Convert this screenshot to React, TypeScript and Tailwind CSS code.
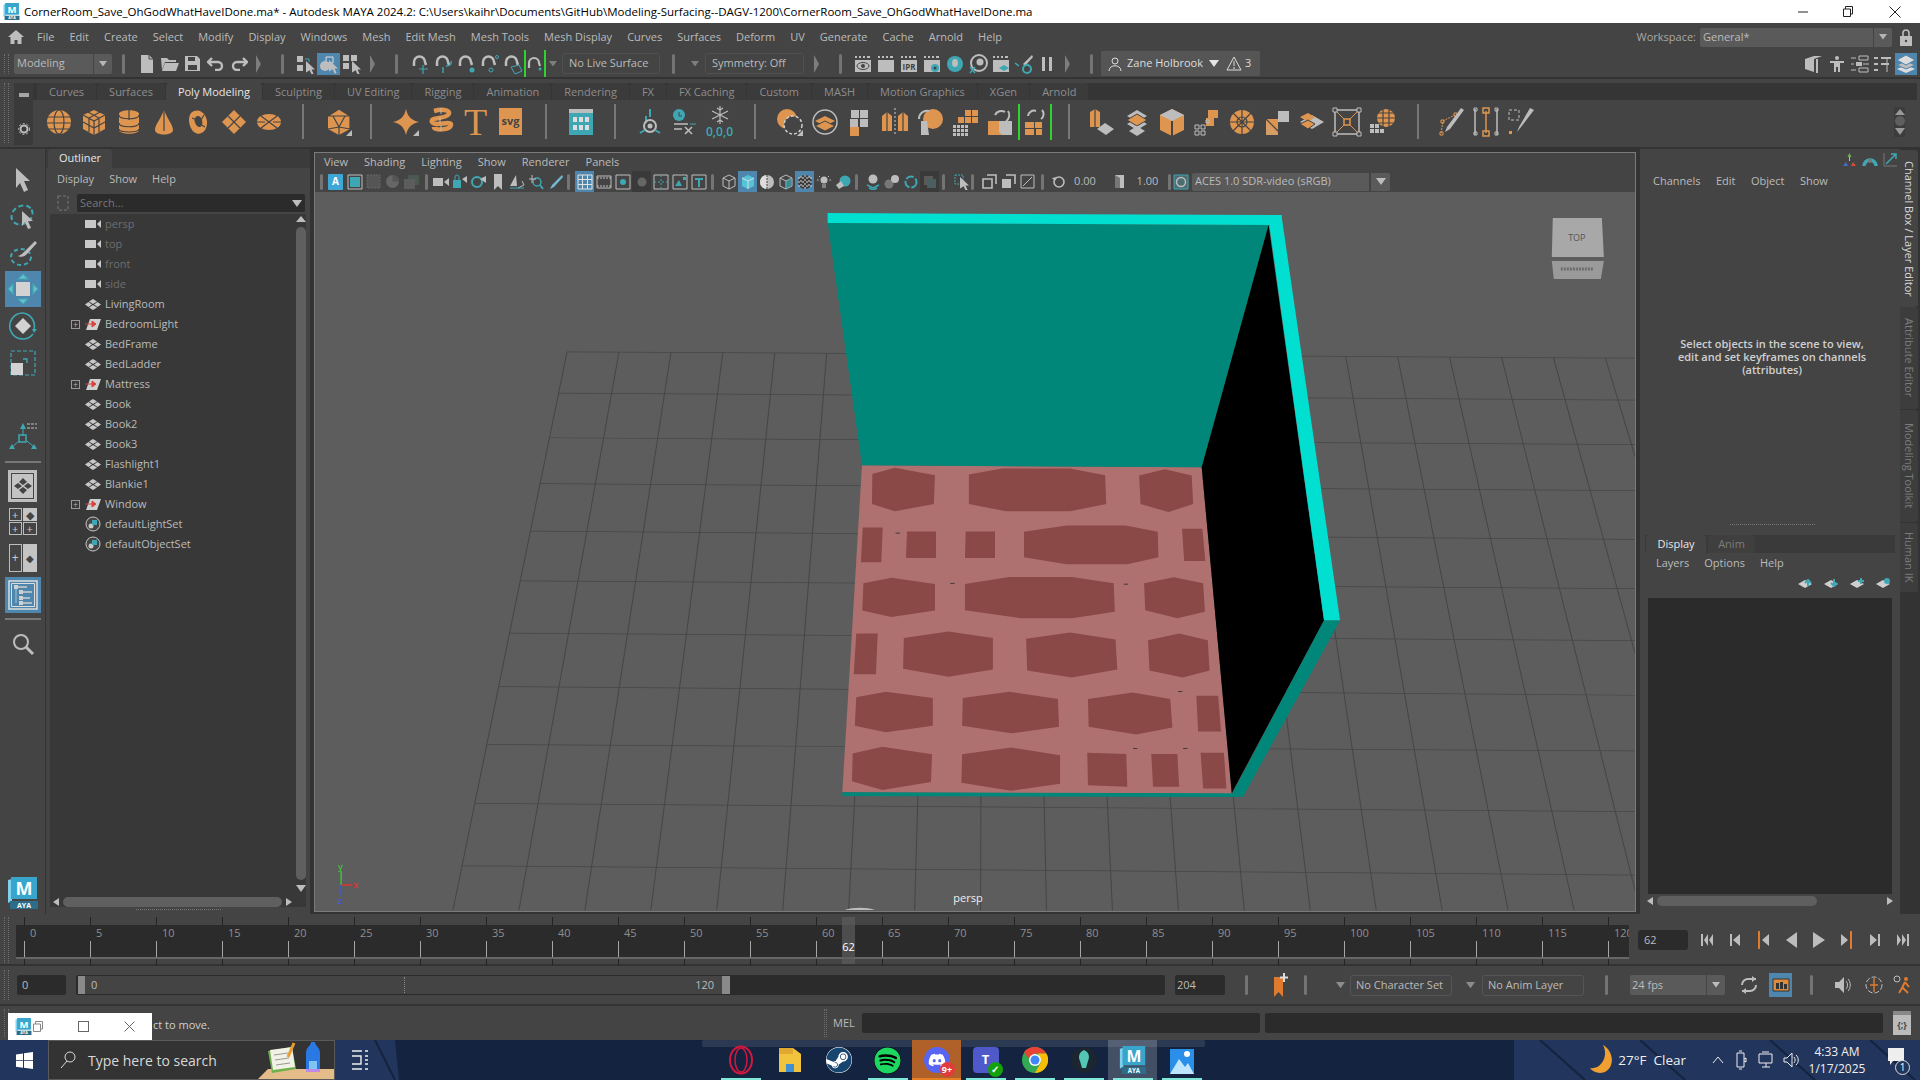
import type { ReactNode } from 'react'
import { FaDiscord, FaSpotify, FaSteam } from 'react-icons/fa'

const G = '#bdbdbd'
const O = '#dd9550'
const T = '#3fa7b4'
const D = '#444444'

function Ic({ s = 16, h, children }: { s?: number; h?: number; children: ReactNode }) {
  return (
    <svg width={s} height={h ?? s} viewBox={`0 0 ${s} ${h ?? s}`} fill="none" className="shrink-0">
      {children}
    </svg>
  )
}

const Cursor = ({ x = 0, y = 0, c = G }: { x?: number; y?: number; c?: string }) => (
  <path transform={`translate(${x} ${y})`} d="M0 0l9 8.5H5.6l2 4.5-1.9.8-2-4.6L0 11.5z" fill={c} />
)

const Sep = ({ className = '' }: { className?: string }) => (
  <div className={`h-[20px] w-[3px] shrink-0 rounded-full bg-[#747474] ${className}`} />
)

const Fold = ({ className = '' }: { className?: string }) => (
  <svg width="5" height="18" viewBox="0 0 5 18" className={`shrink-0 ${className}`}>
    <path d="M0 0l5 9-5 9z" fill="#7d7d7d" />
  </svg>
)

const Grip = ({ className = '' }: { className?: string }) => (
  <div className={`w-[5px] shrink-0 border-x border-dotted border-[#6e6e6e] ${className}`} />
)

const Tri = ({ c = '#8c8c8c', w = 8 }: { c?: string; w?: number }) => (
  <svg width={w} height={w * 0.7} viewBox="0 0 8 5.6" className="shrink-0">
    <path d="M0 0h8L4 5.6z" fill={c} />
  </svg>
)

const Slot = ({ w = 23, blue, dark, children }: { w?: number; blue?: boolean; dark?: boolean; children?: ReactNode }) => (
  <div
    className={`flex h-[22px] shrink-0 items-center justify-center ${blue ? 'bg-[#4f86ad]' : ''} ${dark ? 'bg-[#3a3a3a]' : ''}`}
    style={{ width: w }}
  >
    {children}
  </div>
)

const Green = ({ children }: { children: ReactNode }) => (
  <div className="flex h-[27px] w-[22px] items-center justify-center border-x-2 border-[#2fd32f]">{children}</div>
)

const menus = ['File', 'Edit', 'Create', 'Select', 'Modify', 'Display', 'Windows', 'Mesh', 'Edit Mesh', 'Mesh Tools', 'Mesh Display', 'Curves', 'Surfaces', 'Deform', 'UV', 'Generate', 'Cache', 'Arnold', 'Help']
const shelfTabs = ['Curves', 'Surfaces', 'Poly Modeling', 'Sculpting', 'UV Editing', 'Rigging', 'Animation', 'Rendering', 'FX', 'FX Caching', 'Custom', 'MASH', 'Motion Graphics', 'XGen', 'Arnold']

function TitleBar() {
  return (
    <div className="flex h-[23px] shrink-0 items-center bg-white pl-[3px] text-[11.5px] text-black">
      <MayaLogo size={17} />
      <span className="ml-[4px] whitespace-nowrap">
        CornerRoom_Save_OhGodWhatHaveIDone.ma* - Autodesk MAYA 2024.2: C:\Users\kaihr\Documents\GitHub\Modeling-Surfacing--DAGV-1200\CornerRoom_Save_OhGodWhatHaveIDone.ma
      </span>
      <div className="ml-auto flex items-center">
        <svg width="10" height="10" viewBox="0 0 10 10" className="mr-[35px]"><path d="M0 5h10" stroke="#222" /></svg>
        <svg width="10" height="11" viewBox="0 0 10 11" fill="none" className="mr-[36px]"><path d="M.5 3h7v7.5h-7zM2.5 3V.5h7v7.5H7.5" stroke="#222" /></svg>
        <svg width="12" height="12" viewBox="0 0 12 12" className="mr-[19px]"><path d="M.5.5l11 11M11.5.5l-11 11" stroke="#222" /></svg>
      </div>
    </div>
  )
}

function MenuBar() {
  return (
    <div className="flex h-[27px] shrink-0 items-center pt-[1px] pl-[8px] text-[11px] text-[#bbbbbb]">
      <svg width="16" height="16" viewBox="0 0 16 16"><path d="M8 1L0 8h2.5v7h4v-4h3v4h4V8H16z" fill={G} /></svg>
      <div className="ml-[13px] flex gap-[15px] whitespace-nowrap">
        {menus.map((m, i) => <span key={i}>{m}</span>)}
      </div>
      <span className="ml-auto text-[#a9a9a9]">Workspace:</span>
      <div className="ml-[4px] flex h-[19px] w-[192px] items-center rounded-[2px] bg-[#5a5a5a] pl-[3px]">
        <span>General*</span>
        <div className="ml-auto flex h-full w-[19px] items-center justify-center border-l border-[#444]"><Tri c="#b5b5b5" /></div>
      </div>
      <svg width="12" height="17" viewBox="0 0 12 17" fill="none" className="ml-[8px] mr-[8px]"><path d="M3 7V4a3 3 0 016 0v3" stroke={G} strokeWidth="1.6" /><path d="M0 7h12v10H0z" fill={G} /><circle cx="6" cy="12" r="1.2" fill="#444" /></svg>
    </div>
  )
}

const Field = ({ w, children }: { w: number; children: ReactNode }) => (
  <div className="flex h-[21px] shrink-0 items-center rounded-[3px] border border-[#505050] pl-[6px] text-[#bbbbbb]" style={{ width: w }}>
    <span className="whitespace-nowrap">{children}</span>
  </div>
)

const Magnet = ({ children }: { children?: ReactNode }) => (
  <Ic s={22}>
    <path d="M5 13V9a5.5 5.5 0 0111 0l1 3" stroke={G} strokeWidth="2.5" />
    {children}
  </Ic>
)

const Clap = ({ children }: { children?: ReactNode }) => (
  <Ic s={18}>
    <path d="M1 1h2v2H1zM5 1h2v2H5zM9 1h2v2H9zM13 1h3v2h-3z" fill={G} />
    <path d="M1 5h16v12H1z" fill={G} />
    {children}
  </Ic>
)

function StatusLine() {
  return (
    <div className="flex h-[29px] shrink-0 items-center border-b-2 border-[#333] pl-[4px] text-[11px]">
      <Grip className="h-[20px]" />
      <div className="ml-[5px] flex h-[20px] w-[98px] shrink-0 items-center rounded-[2px] bg-[#5a5a5a] pl-[3px] text-[#bbbbbb]">
        <span>Modeling</span>
        <div className="ml-auto flex h-full w-[19px] items-center justify-center border-l border-[#444]"><Tri c="#b5b5b5" /></div>
      </div>
      <Sep className="ml-[10px]" />
      <div className="ml-[10px] flex">
        <Slot><Ic s={14} h={18}><path d="M1 0h8l4 4v14H1z" fill={G} /><path d="M9 0v4h4" stroke="#444" /></Ic></Slot>
        <Slot><Ic s={18} h={16}><path d="M0 2h6l2 2h7v2H4L1 14zM4 7h14l-3 8H1z" fill={G} /></Ic></Slot>
        <Slot><Ic s={15}><path d="M0 0h12l3 3v12H0z" fill={G} /><path d="M3 1h7v4H3zM3 9h9v5H3z" fill="#444" /></Ic></Slot>
        <Slot><Ic s={18} h={14}><path d="M5 1L1 5l4 4M2 5h9a4 4 0 010 8H8" stroke={G} strokeWidth="2.4" /></Ic></Slot>
        <Slot><Ic s={18} h={14}><path d="M13 1l4 4-4 4M16 5H7a4 4 0 000 8h3" stroke={G} strokeWidth="2.4" /></Ic></Slot>
      </div>
      <Fold className="ml-[6px]" />
      <Sep className="ml-[20px]" />
      <div className="ml-[10px] flex">
        <Slot><Ic s={20}><path d="M1 2h6v6H1zM1 11h6v6H1z" fill={G} /><path d="M9 5h4v3" stroke={T} /><Cursor x={10} y={7} /></Ic></Slot>
        <Slot blue><Ic s={20}><path d="M7 3h7v6H7z" stroke="#ddd" /><circle cx="6" cy="12" r="5" fill={G} /><Cursor x={10} y={6} /></Ic></Slot>
        <Slot><Ic s={20}><path d="M1 1h6v6H1zM9 1h6v6H9zM1 9h6v6H1z" fill={G} /><Cursor x={10} y={7} /></Ic></Slot>
      </div>
      <Fold className="ml-[7px]" />
      <Sep className="ml-[20px]" />
      <div className="ml-[10px] flex items-center">
        <Slot><Magnet><path d="M14 12v9M10 16h9" stroke={T} strokeWidth="1.2" /></Magnet></Slot>
        <Slot><Magnet><path d="M14 13c4 0 6-2 5-5M11 14v6" stroke={T} strokeWidth="1.4" /></Magnet></Slot>
        <Slot><Magnet><circle cx="17" cy="17" r="2.5" fill={T} /></Magnet></Slot>
        <Slot><Magnet><circle cx="13" cy="17" r="2" stroke={T} /><circle cx="19" cy="4" r="1.5" stroke={T} /></Magnet></Slot>
        <Slot><Magnet><path d="M10 14l8-2 3 6-7 3z" stroke={T} /></Magnet></Slot>
        <Slot><Green><Ic s={16}><path d="M2 12V7a5 5 0 0110 0l1 3" stroke={G} strokeWidth="2.2" /><circle cx="13" cy="13" r="1.5" fill={T} /></Ic></Green></Slot>
      </div>
      <div className="ml-[3px]"><Tri c="#7d7d7d" /></div>
      <div className="ml-[5px]"><Field w={98}>No Live Surface</Field></div>
      <Sep className="ml-[12px]" />
      <div className="ml-[16px]"><Tri c="#7d7d7d" /></div>
      <div className="ml-[6px]"><Field w={99}>Symmetry: Off</Field></div>
      <Fold className="ml-[10px]" />
      <Sep className="ml-[20px]" />
      <div className="ml-[9px] flex items-center">
        <Slot><Clap><ellipse cx="9" cy="11" rx="6" ry="3.5" stroke="#444" /><circle cx="9" cy="11" r="2" fill="#444" /></Clap></Slot>
        <Slot><Clap /></Slot>
        <Slot><Clap><text x="9" y="15" textAnchor="middle" fontSize="8" fontWeight="700" fill="#444">IPR</text></Clap></Slot>
        <Slot><Clap><circle cx="12" cy="13" r="4" fill={T} /><circle cx="12" cy="13" r="1.5" fill="#444" /></Clap></Slot>
        <Slot><Ic s={18}><circle cx="9" cy="9" r="8" fill={T} /><ellipse cx="9" cy="8" rx="3" ry="4" fill={G} /></Ic></Slot>
        <Slot><Ic s={20}><circle cx="11" cy="9" r="8" stroke={G} strokeWidth="2" /><circle cx="12" cy="8" r="3.5" fill={G} /><path d="M2 13l5 6M7 13l-5 6" stroke={T} strokeWidth="1.5" /></Ic></Slot>
        <Slot><Clap><path d="M7 13l5-3 5 3-5 3z" fill={T} /></Clap></Slot>
        <Slot><Ic s={20}><path d="M18 1L9 10l2 2 8-9z" fill={G} /><path d="M1 9l4 3" stroke={T} strokeWidth="1.5" /><circle cx="13" cy="15" r="4" stroke={T} strokeWidth="2" /></Ic></Slot>
        <Slot><Ic s={12} h={16}><path d="M1 1h3v14H1zM8 1h3v14H8z" fill={G} /></Ic></Slot>
      </div>
      <Fold className="ml-[7px]" />
      <Sep className="ml-[20px]" />
      <div className="ml-[8px] flex h-[25px] w-[159px] shrink-0 items-center rounded-[1px] bg-[#555] pl-[7px] text-[#dddddd]">
        <Ic s={14}><circle cx="7" cy="4" r="3" stroke="#ddd" /><path d="M1 14c0-7 12-7 12 0" stroke="#ddd" /></Ic>
        <span className="ml-[5px] whitespace-nowrap">Zane Holbrook</span>
        <div className="ml-[6px]"><Tri c="#e4e4e4" w={10} /></div>
        <svg width="16" height="15" viewBox="0 0 16 15" className="ml-[7px]"><path d="M8 1L1 14h14zM8 5v5M8 11v2" stroke="#ddd" fill="none" /></svg>
        <span className="ml-[3px]">3</span>
      </div>
      <div className="ml-auto flex items-center gap-[1px] pr-[3px]">
        <Slot w={22}><Ic s={20}><path d="M1 5l9-3h8l-8 3v13l-9-3z" fill={G} /><path d="M13 5v14" stroke={G} strokeWidth="2" /></Ic></Slot>
        <Slot w={22}><Ic s={18}><circle cx="9" cy="3" r="2" fill={G} /><path d="M2 6h14v2h-4v9h-2v-5H8v5H6V8H2z" fill={G} /></Ic></Slot>
        <Slot w={22}><Ic s={20}><path d="M1 4h5M9 2h9v4H9zM1 16h5M9 14h9v4H9zM1 10h3M13 10h6" stroke={G} /><path d="M6 8h6v4H6z" fill={G} /></Ic></Slot>
        <Slot w={22}><Ic s={20}><path d="M1 4h4M8 4h10M1 10h4M8 10h8M1 16h4" stroke={G} strokeWidth="2" /><path d="M14 4v14" stroke={G} /></Ic></Slot>
        <div className="flex h-[22px] w-[22px] items-center justify-center bg-[#4f86ad]">
          <Ic s={20}><path d="M10 11L1 15l9 4 9-4z" fill="#ddd" /><path d="M10 7L1 11l9 4 9-4z" fill={G} stroke="#4f86ad" /><path d="M10 1L1 6l9 5 9-5z" fill="#ddd" stroke="#4f86ad" /></Ic>
        </div>
      </div>
    </div>
  )
}

const S = ({ children }: { children: ReactNode }) => (
  <div className="flex w-[35px] shrink-0 items-center justify-center">
    <Ic s={30}>{children}</Ic>
  </div>
)

const ShelfSep = ({ className = '' }: { className?: string }) => <div className={`h-[35px] w-[2px] shrink-0 bg-[#777] ${className}`} />

const Corner = () => <path d="M28 23v6h-6z" fill={G} />
const line = { stroke: D, strokeWidth: 1.2 }

function ShelfIcons() {
  return (
    <div className="flex h-[43px] items-center pl-[8px]">
      <S><circle cx="15" cy="15" r="12" fill={O} /><g {...line}><ellipse cx="15" cy="15" rx="5" ry="12" /><path d="M4 10h22M3 16h24M5 22h20" /></g></S>
      <S><path d="M15 3l11 5v14l-11 6-11-6V8z" fill={O} /><g {...line}><path d="M4 8l11 6 11-6M15 14v14M9 5l11 6v14M21 5L10 11v14M4 15l11 6 11-6" /></g></S>
      <S><path d="M5 7c0-5 20-5 20 0v16c0 5-20 5-20 0z" fill={O} /><g {...line}><path d="M5 8c0 5 20 5 20 0M15 3v10M5 16c0 5 20 5 20 0M5 22c0 4 20 4 20 0" /></g></S>
      <S><path d="M15 3c4 10 9 15 9 20 0 6-18 6-18 0 0-5 5-10 9-20z" fill={O} /><path d="M15 3v21" {...line} /></S>
      <S><path d="M10 4c8-3 14 6 13 13-1 9-8 12-13 8S2 7 10 4zm1 7c-2 3 2 10 5 9s3-6 1-9-5-2-6 0z" fill={O} fillRule="evenodd" /><path d="M8 11l5 2M20 8l-3 5M21 20l-5-3" {...line} /></S>
      <S><path d="M15 3l12 12-12 12L3 15z" fill={O} /><path d="M9 9l12 12M21 9L9 21" {...line} /></S>
      <S><ellipse cx="15" cy="15" rx="12" ry="8" fill={O} /><path d="M7 9l16 12M23 9L7 21M3 15h8M19 15h8" {...line} /></S>
      <ShelfSep className="ml-[16px]" />
      <div className="ml-[17px]"><S><path d="M15 2l11 7v13l-11 6-11-6V9z" fill={O} /><path d="M4 9h22L15 2zM9 9l6 11 6-11M4 22l11-2 11 2M15 20v8M4 9l5 0M26 9v13" {...line} fill="none" /><Corner /></S></div>
      <ShelfSep className="ml-[14px]" />
      <div className="ml-[16px]"><S><path d="M15 2c2 8 5 11 13 13-8 2-11 5-13 13-2-8-5-11-13-13 8-2 11-5 13-13z" fill={O} /><Corner /></S></div>
      <S><path d="M8 4c10-3 18 0 14 4S4 10 6 15s20-2 19 3-17 6-17 2" stroke={O} strokeWidth="4.5" /><path d="M15 1v6M14 10v6M15 18v6" stroke={G} /></S>
      <div className="flex w-[35px] shrink-0 items-center justify-center font-['Liberation_Serif',serif] text-[38px] leading-none text-[#dd9550]">T</div>
      <div className="flex w-[35px] shrink-0 items-center justify-center">
        <div className="flex h-[27px] w-[23px] items-center justify-center bg-[#dd9550] text-[11px] font-bold text-[#444]">svg</div>
      </div>
      <ShelfSep className="ml-[17px]" />
      <div className="ml-[16px]"><S><path d="M3 2h24v26H3z" fill={T} /><path d="M3 2h24v4H3z" fill={G} /><path d="M7 10h4v5H7zM13 10h4v5h-4zM19 10h4v5h-4zM7 18h4v5H7zM13 18h4v5h-4zM19 18h4v5h-4z" fill="#ddd" /></S></div>
      <ShelfSep className="ml-[16px]" />
      <div className="ml-[16px]"><S><path d="M11 9v7" stroke={T} strokeWidth="2" /><circle cx="15" cy="19" r="6" stroke={G} strokeWidth="2" /><circle cx="15" cy="19" r="2.5" fill={G} /><path d="M5 26l5-3M25 26l-5-3M15 2v8" stroke={T} strokeWidth="2" /></S></div>
      <S><circle cx="9" cy="8" r="6" fill={T} /><path d="M9 5v4h3" stroke={D} /><path d="M4 17h14M4 22h8M15 20l7 7M22 20l-7 7" stroke={G} strokeWidth="1.6" /><path d="M20 17h6" stroke={T} /></S>
      <div className="flex w-[35px] shrink-0 flex-col items-center">
        <Ic s={20}><path d="M10 0v18M2 5l16 8M18 5L2 13M7 2l3 2 3-2M7 16l3-2 3 2" stroke={G} strokeWidth="1.2" /></Ic>
        <span className="text-[12px] font-semibold leading-[11px] text-[#3fa7b4]">0,0,0</span>
      </div>
      <ShelfSep className="ml-[17px]" />
      <div className="ml-[16px]"><S><circle cx="12" cy="12" r="10" fill={O} /><circle cx="18" cy="18" r="9" stroke="#cfcfcf" strokeDasharray="3 2" strokeWidth="1.5" fill={D} /><path d="M28 23v6h-6z" fill={G} /></S></div>
      <S><circle cx="15" cy="15" r="12" stroke={G} strokeWidth="1.5" /><path d="M15 9l10 5-10 5-10-5z" fill={O} /><path d="M15 14l10 5-10 5-10-5z" fill={O} stroke={D} /></S>
      <S><path d="M15 3h8v8h-8zM24 3h-0zM15 12h8v8h-8zM5 12h8v8H5z" fill={G} /><path d="M5 20h9v9H5z" fill={O} /><path d="M6 3h8v8H6z" fill={G} /></S>
      <S><path d="M2 9l5-4 5 4v15H2zM18 9l5-4 5 4v15H18z" fill={O} /><path d="M7 5v19M23 5v19" {...line} /><path d="M15 1v28" stroke="#ccc" strokeDasharray="2 2" /></S>
      <S><circle cx="18" cy="12" r="10" fill={O} /><path d="M6 14l6 0 2 14H6z" fill={G} /><path d="M4 12a8 8 0 0110-8" stroke={G} strokeWidth="2" /></S>
      <S><path d="M15 3h6v6h-6zM22 3h6v6h-6zM15 10h6v6h-6zM22 10h6v6h-6zM8 10h6v6H8z" fill={O} /><path d="M3 18h3v3H3zM7 18h3v3H7zM11 18h3v3h-3zM15 18h3v3h-3zM3 22h3v3H3zM7 22h3v3H7zM11 22h3v3h-3zM15 22h3v3h-3zM3 26h3v3H3zM7 26h3v3H7zM11 26h3v3h-3zM15 26h3v3h-3z" fill={G} /></S>
      <S><path d="M14 14h13v14H3V14z" fill={G} /><path d="M3 14h11v14H3zL14 28" fill={O} /><path d="M3 14l14 14H3z" fill={O} /><path d="M10 8a7 7 0 0110-3M23 4a7 7 0 01-2 10" stroke={G} strokeWidth="2" /></S>
      <div className="flex w-[35px] shrink-0 items-center justify-center">
        <div className="flex h-[36px] w-[34px] items-center justify-center border-x-2 border-[#2fd32f]">
          <Ic s={30}><path d="M5 15h9v6H5zM15 15h7v6h-7zM5 22h9v6H5z" fill={O} /><path d="M16 22h6v6h-6z" fill={O} /><path d="M8 9a6 6 0 018-5M22 3a6 6 0 01-1 9" stroke={G} strokeWidth="2" /></Ic>
        </div>
      </div>
      <ShelfSep className="ml-[16px]" />
      <div className="ml-[14px]"><S><path d="M3 5l5-3 5 3v15H3z" fill={O} /><path d="M8 2v18" {...line} /><path d="M18 16l9 6-8 6-9-6z" fill={G} /></S></div>
      <S><path d="M15 3l10 6-10 6L5 9zM15 11l10 6-10 6-10-6z" fill={G} /><path d="M15 7l10 6-10 6-10-6z" fill={O} stroke={D} /><path d="M15 19l8 5-8 5-8-5z" fill={G} /></S>
      <S><path d="M15 2l12 6v15l-12 6-12-6V8z" fill={O} /><path d="M15 2l12 6-12 6L3 8z" fill={G} /><path d="M15 14v15" stroke={D} strokeWidth="2" /></S>
      <S><path d="M16 3h10v8h-4v8h-8v-8h2z" fill={O} /><path d="M3 18h4v4H3zM9 18h4v4H9zM3 24h4v4H3zM9 24h4v4H9z" stroke={G} /><path d="M14 13h3v3h-3z" stroke={G} /></S>
      <S><circle cx="15" cy="15" r="12" fill={O} /><circle cx="15" cy="15" r="5" {...line} /><path d="M15 3v24M3 15h24M6 6l18 18M24 6L6 24" {...line} /></S>
      <S><path d="M4 12h12v16H4z" fill={O} /><path d="M4 12l12 16H4z" fill={G} opacity=".2" /><path d="M16 4h11v11l-11 0z" fill={G} /><path d="M4 12L16 24" {...line} /></S>
      <S><path d="M15 8l12 7-12 7-12-7z" fill={G} /><path d="M11 6l7 4-7 5-8-5z" fill={O} /><path d="M11 13l7 4-7 5-8-5z" fill={O} stroke={D} /></S>
      <S><path d="M3 3h24v24H3z" stroke={G} strokeWidth="1.5" /><path d="M4 4l8 8M26 4l-8 8M4 26l8-8M26 26l-8-8" stroke={O} /><path d="M12 12h6v6h-6z" stroke={O} strokeWidth="1.5" /><path d="M1 1h4v4H1zM25 1h4v4h-4zM1 25h4v4H1zM25 25h4v4h-4z" fill={D} stroke={G} /></S>
      <S><circle cx="19" cy="11" r="9" fill={O} /><path d="M11 6h16M10 11h18M12 16h14M16 2v18M22 2v18" {...line} /><path d="M3 17h4v4H3zM8 17h4v4H8zM3 22h4v4H3zM8 22h4v4H8zM13 22h4v4h-4z" fill={G} /></S>
      <ShelfSep className="ml-[18px]" />
      <div className="ml-[14px]"><S><path d="M5 26l2-12 12-6" stroke={O} strokeDasharray="2 1" /><path d="M4 25h3v3H4zM5 13h3v3H5zM18 6h3v3h-3z" stroke={O} /><path d="M28 3l-14 19-5 3 2-5 14-19z" fill={G} /></S></div>
      <S><path d="M4 2v26M26 2v26" stroke={G} strokeWidth="1.5" /><path d="M15 4v22" stroke={O} strokeWidth="1.5" /><path d="M12 1h6v5h-6zM12 24h6v5h-6z" stroke={O} strokeWidth="1.5" /><path d="M3 1h3v3H3zM24 1h3v3h-3zM3 25h3v3H3zM24 25h3v3h-3z" stroke={G} /></S>
      <S><path d="M3 3h10v10H3z" stroke={G} strokeDasharray="3 2" /><path d="M3 24h3v3H3z" fill={O} /><path d="M28 3L15 20l-4 5 2-5L24 1z" fill={G} /></S>
      <div className="ml-auto mr-[12px] flex h-[30px] w-[11px] flex-col items-center justify-between bg-[#3c3c3c] py-[2px]">
        <svg width="10" height="6" viewBox="0 0 10 6"><path d="M5 0l5 6H0z" fill="#999" /></svg>
        <div className="h-[10px] w-[10px] rounded-full bg-[#5f5f5f]" />
        <Tri c="#999" w={10} />
      </div>
    </div>
  )
}

function Shelf() {
  return (
    <div className="flex h-[70px] shrink-0 items-start border-b-2 border-[#333] pt-[4px] pl-[4px]">
      <Grip className="h-[60px]" />
      <div className="ml-[5px] flex h-[62px] w-[19px] shrink-0 flex-col items-center justify-between bg-[#3a3a3a] py-[10px]">
        <div className="h-[4px] w-[10px] border-y border-[#a5a5a5] bg-[#a5a5a5]" />
        <Ic s={12}><circle cx="6" cy="6" r="3.5" stroke={G} strokeWidth="2" /><circle cx="6" cy="6" r="5.5" stroke={G} strokeDasharray="2 2" /></Ic>
      </div>
      <div className="flex min-w-0 flex-1 flex-col pr-[3px]">
        <div className="flex h-[17px] items-end gap-[1px] bg-[#353535] pl-[4px] text-[11px] leading-none">
          {shelfTabs.map((t, i) => (
            <div
              key={i}
              className={`flex h-[17px] items-center whitespace-nowrap rounded-t-[3px] px-[12px] ${t === 'Poly Modeling' ? 'bg-[#444] text-[#e6e6e6]' : 'bg-[#3b3b3b] text-[#8d8d8d]'}`}
            >
              {t}
            </div>
          ))}
        </div>
        <ShelfIcons />
      </div>
    </div>
  )
}

function Toolbox() {
  return (
    <div className="flex w-[45px] shrink-0 flex-col items-center bg-[#444] pt-[18px]">
      <Ic s={26}><path d="M6 1l14 13h-6l4 9-4 2-4-9-4 5z" fill={G} /></Ic>
      <div className="mt-[10px]"><Ic s={28}><ellipse cx="13" cy="12" rx="11" ry="9" stroke={T} strokeWidth="2" strokeDasharray="5 3" transform="rotate(-30 13 12)" /><path d="M13 8l11 10h-5l3 7-3 1-3-7-3 4z" fill={G} /></Ic></div>
      <div className="mt-[7px]"><Ic s={30}><ellipse cx="13" cy="19" rx="10" ry="8" stroke={T} strokeWidth="2" strokeDasharray="4 3" /><path d="M10 18c3-1 5-3 7-5l10-10 2 2-10 11c-2 2-5 4-9 2z" fill={G} /></Ic></div>
      <div className="mt-[3px] flex h-[36px] w-[36px] items-center justify-center bg-[#4f86ad]">
        <Ic s={32}><path d="M9 9h14v14H9z" fill="#d2d2d2" /><path d="M16 1l5 5H11zM16 31l5-5H11zM1 16l5-5v10zM31 16l-5-5v10z" stroke={T} strokeWidth="1.2" fill="#6cc0cc" /></Ic>
      </div>
      <div className="mt-[3px]"><Ic s={32}><path d="M16 3a13 13 0 1 0 10 21M27 19a13 13 0 0 0-11-16" stroke={T} strokeWidth="1.6" /><path d="M16 8l8 8-8 8-8-8z" fill="#d2d2d2" /><path d="M25 19l5 0-3 4z" fill={T} /></Ic></div>
      <div className="mt-[7px]"><Ic s={28}><path d="M2 2h24v24H2z" stroke={T} strokeWidth="1.2" strokeDasharray="4 2" /><path d="M2 14h12v12H2z" fill="#d2d2d2" /><path d="M14 10h4v4" stroke={T} strokeWidth="1.4" /></Ic></div>
      <div className="mt-[44px]"><Ic s={32}><path d="M16 2l3 6h-6zM2 28l3-5 3 5zM30 28l-3-5-3 5z" fill={T} /><path d="M16 8v7M12 20l-7 6M20 20l7 6" stroke={T} /><path d="M12 14h7v7h-7z" stroke={T} strokeWidth="1.5" /><path d="M20 3h10M20 7h10" stroke={G} strokeDasharray="3 1" /></Ic></div>
      <div className="mt-[8px] h-[2px] w-[36px] bg-[#777]" />
      <div className="mt-[7px] flex h-[32px] w-[29px] items-center justify-center border-2 border-[#bdbdbd] bg-[#c4c4c4] outline outline-1 -outline-offset-4 outline-[#444]">
        <Ic s={18}><path d="M9 1l4 4-4 3-4-3zM4 6l4 3-4 3-4-3zM14 6l4 3-4 3-4-3zM9 10l4 3-4 4-4-4z" fill="#444" /></Ic>
      </div>
      <div className="mt-[6px] grid w-[28px] grid-cols-2 gap-[1px]">
        <PanelCell /><PanelCell filled /><PanelCell /><PanelCell />
      </div>
      <div className="mt-[9px] grid w-[28px] grid-cols-2 gap-[1px]">
        <div className="flex h-[28px] items-center justify-center border border-[#bdbdbd] text-[12px] text-[#ccc]">+</div>
        <div className="flex h-[28px] items-center justify-center bg-[#c4c4c4] text-[10px] text-[#444]">◆</div>
      </div>
      <div className="mt-[5px] flex h-[36px] w-[36px] items-center justify-center bg-[#4f86ad]">
        <Ic s={30}><path d="M1 1h28v28H1z" stroke="#ddd" strokeWidth="1.5" /><path d="M3.5 3.5h23v23h-23z" stroke="#ddd" /><path d="M6 5h4v4H6zM11 10h4v4h-4zM11 16h4v4h-4zM11 21h4v4h-4z" fill="#d0d0d0" /><path d="M10 7h9M15 12h9M15 18h7M15 23h9" stroke="#d0d0d0" strokeWidth="1.5" /><path d="M8 9v14" stroke="#a8c4d6" /></Ic>
      </div>
      <div className="mt-[5px] h-[2px] w-[36px] bg-[#777]" />
      <div className="mt-[12px]"><Ic s={24}><circle cx="10" cy="10" r="7" stroke={G} strokeWidth="2" /><path d="M15 15l7 7" stroke={G} strokeWidth="3" /></Ic></div>
      <div className="mt-auto mb-[5px]"><MayaLogo size={32} /></div>
    </div>
  )
}

const PanelCell = ({ filled }: { filled?: boolean }) => (
  <div className={`flex h-[13px] items-center justify-center text-[11px] leading-none ${filled ? 'bg-[#c4c4c4] text-[#444]' : 'border border-[#bdbdbd] text-[#ccc]'}`}>
    {filled ? '◆' : '+'}
  </div>
)

function MayaLogo({ size }: { size: number }) {
  return (
    <svg width={size} height={size} viewBox="0 0 32 32" className="shrink-0">
      <path d="M1 3l4-1v22l-4 2z" fill="#7fd0ea" />
      <path d="M4 0h26v22H4z" fill="#37a5cc" />
      <path d="M3 24h28v8H3z" fill="#2c6d8a" />
      <text x="17" y="18" textAnchor="middle" fontSize="18" fontWeight="700" fill="#fff">M</text>
      <text x="17" y="31" textAnchor="middle" fontSize="7" fontWeight="700" fill="#fff">AYA</text>
    </svg>
  )
}

const CamIcon = () => <Ic s={16} h={10}><path d="M0 1h11v8H0z" fill="#c8c8c8" /><path d="M12 5l4-4v8z" fill="#c8c8c8" /></Ic>
const MeshIcon = () => <Ic s={16} h={11}><path d="M8 0l4 2.5L8 5 4 2.5zM3.5 3L7 5.5 3.5 8 0 5.5zM12.5 3L16 5.5 12.5 8 9 5.5zM8 6l4 2.5L8 11 4 8.5z" fill="#c8c8c8" /></Ic>
const LightIcon = () => <Ic s={16} h={13}><path d="M5 1h11l-4 11H1z" fill="#d0d0d0" /><path d="M0 6h10M7 3l4 3-4 3z" stroke="#d6423d" fill="#d6423d" /></Ic>
const SetIcon = () => <Ic s={16}><circle cx="8" cy="8" r="7" stroke="#c8c8c8" fill="#444" /><circle cx="6" cy="10" r="2.5" fill="#c8c8c8" /><path d="M7 4h5v5H7z" fill={T} /></Ic>

const rows: { name: string; kind: 'cam' | 'mesh' | 'light' | 'set' }[] = [
  { name: 'persp', kind: 'cam' },
  { name: 'top', kind: 'cam' },
  { name: 'front', kind: 'cam' },
  { name: 'side', kind: 'cam' },
  { name: 'LivingRoom', kind: 'mesh' },
  { name: 'BedroomLight', kind: 'light' },
  { name: 'BedFrame', kind: 'mesh' },
  { name: 'BedLadder', kind: 'mesh' },
  { name: 'Mattress', kind: 'light' },
  { name: 'Book', kind: 'mesh' },
  { name: 'Book2', kind: 'mesh' },
  { name: 'Book3', kind: 'mesh' },
  { name: 'Flashlight1', kind: 'mesh' },
  { name: 'Blankie1', kind: 'mesh' },
  { name: 'Window', kind: 'light' },
  { name: 'defaultLightSet', kind: 'set' },
  { name: 'defaultObjectSet', kind: 'set' },
]

function Outliner() {
  return (
    <div className="ml-[1px] flex w-[264px] shrink-0 flex-col bg-[#444] text-[11px] text-[#bbbbbb]">
      <div className="h-[19px] shrink-0 bg-[#3b3b3b] pl-[2px]">
        <div className="flex h-[19px] w-[64px] items-center justify-center rounded-t-[3px] bg-[#444] text-[#e6e6e6]">Outliner</div>
      </div>
      <div className="flex h-[22px] shrink-0 items-center gap-[15px] pl-[11px]">
        <span>Display</span><span>Show</span><span>Help</span>
      </div>
      <div className="mt-[2px] flex h-[22px] shrink-0 items-center pl-[9px]">
        <Ic s={16}><path d="M3 1h10v14H3z" stroke="#666" strokeDasharray="3 2" strokeWidth="1.5" /></Ic>
        <div className="ml-[6px] flex h-[18px] w-[228px] items-center rounded-[2px] bg-[#2b2b2b] px-[3px] text-[#777]">
          <span>Search...</span>
          <div className="ml-auto"><Tri c="#bdbdbd" w={10} /></div>
        </div>
      </div>
      <div className="mx-[4px] mb-[2px] flex min-h-0 flex-1 flex-col bg-[#383838]">
        <div className="flex min-h-0 flex-1">
          <div className="min-w-0 flex-1">
            {rows.map(r => (
              <div key={r.name} className="flex h-[20px] items-center pl-[21px]">
                <div className="flex h-[9px] w-[9px] shrink-0 items-center justify-center">
                  {r.kind === 'light' && <div className="flex h-[9px] w-[9px] items-center justify-center border border-[#999] text-[9px] leading-none text-[#aaa]">+</div>}
                </div>
                <div className="ml-[5px] flex w-[16px] shrink-0 justify-center">
                  {r.kind === 'cam' && <CamIcon />}
                  {r.kind === 'mesh' && <MeshIcon />}
                  {r.kind === 'light' && <LightIcon />}
                  {r.kind === 'set' && <SetIcon />}
                </div>
                <span className={`ml-[4px] ${r.kind === 'cam' ? 'text-[#6e6e6e]' : ''}`}>{r.name}</span>
              </div>
            ))}
          </div>
          <div className="flex w-[10px] shrink-0 flex-col items-center pt-[2px]">
            <svg width="10" height="6" viewBox="0 0 10 6"><path d="M5 0l5 6H0z" fill="#bdbdbd" /></svg>
            <div className="mt-[5px] w-[10px] flex-1 rounded-full bg-[#5f5f5f]" />
            <div className="mt-[5px] mb-[5px]"><Tri c="#bdbdbd" w={10} /></div>
          </div>
        </div>
        <div className="flex h-[10px] shrink-0 items-center pl-[3px] pr-[14px]">
          <svg width="6" height="8" viewBox="0 0 6 8"><path d="M0 4l6-4v8z" fill="#bdbdbd" /></svg>
          <div className="ml-[4px] h-[10px] flex-1 rounded-full bg-[#5f5f5f]" />
          <svg width="6" height="8" viewBox="0 0 6 8" className="ml-[4px]"><path d="M6 4L0 0v8z" fill="#bdbdbd" /></svg>
        </div>
      </div>
      <div className="mb-[4px] ml-[90px] h-0 w-[85px] shrink-0 border-t border-dotted border-[#777]" />
    </div>
  )
}

const V = ({ blue, dark, children }: { blue?: boolean; dark?: boolean; children?: ReactNode }) => (
  <Slot w={19} blue={blue} dark={dark}>{children}</Slot>
)

const VSep = ({ className = '' }: { className?: string }) => <Sep className={`!h-[16px] ${className}`} />

function ViewToolbar() {
  return (
    <div className="flex h-[21px] shrink-0 items-center pl-[5px] text-[11px] text-[#bbbbbb]">
      <Sep className="!h-[16px]" />
      <div className="ml-[3px] flex">
        <V><div className="flex h-[16px] w-[15px] items-center justify-center rounded-[1px] bg-[#3fa7d6] text-[10px] font-bold text-white">A</div></V>
        <V><Ic s={16}><path d="M1 1h14v14H1z" stroke={G} /><path d="M3 3h10v10H3z" fill={T} /></Ic></V>
        <V><Ic s={15}><path d="M1 1h13v13H1z" fill="#555" stroke="#666" strokeDasharray="2 1" /></Ic></V>
        <V><Ic s={15}><circle cx="7.5" cy="7.5" r="6.5" fill="#666" /><path d="M7.5 1a6.5 6.5 0 016.5 6.5H7.5z" fill="#555" /></Ic></V>
        <V><Ic s={15}><path d="M4 1h11v10H4z" fill="#4a5a50" /><path d="M0 5h11v10H0z" fill="#5c5c5c" /></Ic></V>
      </div>
      <VSep className="ml-[4px]" />
      <div className="ml-[3px] flex">
        <V><Ic s={16} h={10}><path d="M0 1h10v8H0zM11 5l5-4v8z" fill={G} /></Ic></V>
        <V><Ic s={16}><path d="M1 6h8v8H1z" fill={T} /><path d="M3 6V3a2 2 0 014 0v3" stroke={T} /><path d="M10 5l5-3v7z" fill={G} /></Ic></V>
        <V><Ic s={16}><circle cx="6" cy="8" r="5" stroke={T} strokeWidth="2" /><path d="M9 5l6-3v7z" fill={G} /></Ic></V>
        <V><Ic s={10} h={16}><path d="M1 0h8v16l-4-4-4 4z" fill={G} /></Ic></V>
        <V><Ic s={16}><path d="M7 1l1 11H1z" fill={G} /><path d="M9 14l6-3-2-4" stroke={G} /><path d="M1 14h14" stroke={T} /></Ic></V>
        <V><Ic s={16}><circle cx="9" cy="8" r="4" stroke={T} strokeWidth="1.5" /><path d="M12 11l3 4" stroke={T} strokeWidth="2" /><path d="M4 1v8M1 5h7" stroke={G} /></Ic></V>
        <V><Ic s={16}><path d="M15 1L5 11l-2 4 4-2L16 3z" fill="#72b8cf" /></Ic></V>
      </div>
      <VSep className="ml-[3px]" />
      <div className="ml-[5px] flex">
        <V blue><Ic s={16}><path d="M1 1h14v14H1zM5.5 1v14M10.5 1v14M1 5.5h14M1 10.5h14" stroke="#e2e2e2" /></Ic></V>
        <V><Ic s={16}><path d="M1 2h14v12H1z" stroke={G} /><path d="M1 4h14M1 12h14" stroke={G} strokeDasharray="2 1" /></Ic></V>
        <V><Ic s={16}><path d="M1 1h14v14H1z" stroke={G} /><circle cx="8" cy="8" r="3" fill={T} /></Ic></V>
        <V dark><Ic s={16}><circle cx="8" cy="8" r="4.5" fill="#666" /></Ic></V>
        <V><Ic s={16}><path d="M1 1h14v14H1z" stroke={G} /><path d="M8 1v14M1 8h14" stroke={T} strokeDasharray="2 2" /></Ic></V>
        <V><Ic s={16}><path d="M1 1h14v14H1z" stroke={G} /><path d="M3 12l4-6 3 6zM11 3h3v3h-3z" fill={T} /></Ic></V>
        <V><Ic s={16}><path d="M1 1h14v14H1z" stroke={G} /><path d="M4 4h8v2H9v7H7V6H4z" fill={T} /></Ic></V>
      </div>
      <VSep className="ml-[3px]" />
      <div className="ml-[5px] flex">
        <V><Ic s={16}><path d="M8 1l6 3v8l-6 3-6-3V4zM2 4l6 3 6-3M8 7v8" stroke={G} /></Ic></V>
        <V blue><Ic s={16}><path d="M8 1l6 3v8l-6 3-6-3V4z" fill="#56c4d8" /><path d="M2 4l6 3 6-3M8 7v8" stroke="#ddd" /></Ic></V>
        <V><Ic s={16}><circle cx="8" cy="8" r="7" fill={G} /><path d="M8 1a7 7 0 000 14z" fill="#ddd" /><path d="M8 1v14" stroke="#444" strokeDasharray="2 1" /></Ic></V>
        <V><Ic s={16}><path d="M8 1l6 3v8l-6 3-6-3V4zM2 4l6 3 6-3M8 7v8" stroke={G} /><path d="M8 7l6-3v8l-6 3z" fill={T} opacity=".7" /></Ic></V>
        <V blue><Ic s={16}><circle cx="8" cy="8" r="7" fill="#3a3a3a" /><path d="M4 2v12M8 1v14M12 2v12M1 4h14M1 8h14M1 12h14" stroke="#ddd" strokeDasharray="2 2" /></Ic></V>
        <V><Ic s={16}><circle cx="8" cy="6" r="3.5" fill={G} /><path d="M6 11h4M6 13h4M1 6h1.5M13.5 6H15M3 2l1 1M13 2l-1 1" stroke={G} /></Ic></V>
        <V><Ic s={16}><circle cx="10" cy="7" r="5.5" fill={T} /><path d="M1 11l5-4 3 5-5 3z" fill={G} /></Ic></V>
      </div>
      <VSep className="ml-[3px]" />
      <div className="ml-[5px] flex">
        <V><Ic s={16}><circle cx="8" cy="5" r="4.5" fill={G} /><path d="M2 11l6 3 6-3M4 14l4 2 4-2" stroke={T} strokeWidth="1.4" /></Ic></V>
        <V><Ic s={16}><circle cx="5" cy="10" r="4.5" fill="#777" /><circle cx="11" cy="5" r="4" fill={G} /></Ic></V>
        <V><Ic s={16}><circle cx="8" cy="8" r="5.5" stroke={T} strokeWidth="2" strokeDasharray="8 2" /></Ic></V>
        <V dark><Ic s={14}><path d="M1 1h9v9H1z" fill="#5a5a5a" /><path d="M4 4h9v9H4z" fill="#4a6060" /></Ic></V>
      </div>
      <VSep className="ml-[3px]" />
      <div className="ml-[7px]"><V><Ic s={16}><path d="M1 1h8v9H1z" stroke={T} strokeDasharray="2 1" /><Cursor x={6} y={3} /></Ic></V></div>
      <VSep className="ml-0" />
      <div className="ml-[6px] flex">
        <V><Ic s={15}><path d="M1 5h9v9H1zM5 1h9v9" stroke={G} strokeWidth="1.6" /></Ic></V>
        <V><Ic s={15}><path d="M1 5h9v9H1z" fill={G} /><path d="M5 1h9v9" stroke={G} strokeWidth="1.6" /></Ic></V>
        <V><Ic s={15}><path d="M1 1h13v13H1z" stroke={G} /><path d="M3 12L12 3" stroke={G} /></Ic></V>
      </div>
      <VSep className="ml-[4px]" />
      <div className="ml-[5px]"><V><Ic s={15}><circle cx="8" cy="8" r="5" stroke={G} strokeWidth="1.6" /><path d="M1 4l5-1-2 4z" fill={G} /></Ic></V></div>
      <div className="ml-[4px] w-[26px] text-center">0.00</div>
      <div className="ml-[12px]"><V><Ic s={15}><path d="M3 1h9v13H3z" fill={G} /><path d="M3 1l5 3v10H3z" fill="#777" /></Ic></V></div>
      <div className="ml-[5px] w-[27px] text-center">1.00</div>
      <VSep className="ml-[7px]" />
      <div className="ml-0"><V><Ic s={16}><path d="M1 1h14v14H1z" fill="#4d6d72" stroke={T} /><circle cx="8" cy="8" r="4.5" stroke={G} strokeWidth="1.5" /></Ic></V></div>
      <div className="ml-[2px] flex h-[18px] w-[198px] shrink-0 items-center">
        <div className="flex h-full w-[177px] items-center rounded-l-[2px] bg-[#5a5a5a] pl-[3px] whitespace-nowrap">ACES 1.0 SDR-video (sRGB)</div>
        <div className="ml-[2px] flex h-full flex-1 items-center justify-center rounded-r-[2px] bg-[#5a5a5a]"><Tri c="#bdbdbd" w={10} /></div>
      </div>
    </div>
  )
}

const h = [
  [298, 330, 344], [288, 420, 435], [277, 517, 532], [266, 617, 632], [255, 720, 738], [243, 828, 845],
  [230, 942, 958], [217, 1058, 1077], [203, 1184, 1198], [188, 1312, 1330], [173, 1448, 1468],
]
const fan = Array.from({ length: 22 }, (_, i) => i)

const bricks = [
  '147,692 210,676 322,695 319,768 210,786 146,768',
  '417,693 510,678 700,678 798,695 801,768 700,786 520,786 417,768',
  '893,696 965,680 1040,696 1044,768 975,788 897,768',
  '120,827 176,827 172,915 115,915',
  '244,837 325,837 325,904 241,904',
  '408,837 490,837 490,904 406,904',
  '571,838 690,822 855,822 945,838 947,902 860,920 690,920 571,902',
  '1013,830 1070,830 1078,912 1019,912',
  '122,968 200,954 322,970 322,1037 200,1053 119,1037',
  '406,970 530,952 705,952 822,968 825,1040 705,1056 560,1056 406,1036',
  '907,968 990,953 1072,968 1077,1040 1000,1056 910,1036',
  '102,1095 162,1095 157,1198 95,1198',
  '235,1106 360,1090 484,1106 484,1186 360,1204 233,1184',
  '577,1108 700,1092 827,1110 832,1186 705,1206 580,1188',
  '918,1112 1005,1095 1085,1112 1090,1188 1015,1206 922,1188',
  '102,1256 185,1242 316,1258 316,1328 185,1344 98,1328',
  '400,1258 530,1242 666,1260 669,1330 535,1347 398,1328',
  '750,1260 875,1244 980,1260 986,1332 885,1350 752,1330',
  '1053,1252 1114,1252 1122,1342 1058,1342',
  '92,1398 175,1381 314,1400 311,1470 175,1490 90,1468',
  '398,1400 535,1383 672,1402 672,1474 535,1492 396,1472',
  '748,1396 857,1399 860,1482 750,1478',
  '927,1399 1000,1399 1005,1482 932,1482',
  '1065,1396 1130,1396 1137,1486 1072,1486',
]
const specks = [[365, 967], [850, 969], [212, 840], [1002, 1240], [876, 1384], [1016, 1384]]

function Scene() {
  return (
    <svg viewBox="316 192 1318 718" className="block min-h-0 w-full flex-1 bg-[#5d5d5d]">
      <g transform="translate(316 200) scale(.8444 .4592)" stroke="#464646">
        {h.map(([x, y1, y2], i) => (
          <line key={i} x1={x} y1={y1} x2="1562" y2={y2} strokeWidth="1.6" />
        ))}
        {fan.map(i => (
          <line key={i} x1={298 + i * 61.4} y1={330 + i * 0.7} x2={163 + i * 78} y2="1545" strokeWidth="1.2" />
        ))}
      </g>
      <g transform="translate(820 200) scale(.3571 .3954)">
        <polygon points="118,670 1068,675 1152,1500 63,1496" fill="#ae7170" />
        {bricks.map((p, i) => <polygon key={i} points={p} fill="#8a4847" />)}
        {specks.map(([x, y], i) => <rect key={i} x={x} y={y} width="12" height="2.5" fill="#3c3c3c" />)}
        <polygon points="22,58 1255,63 1068,675 118,670" fill="#00877a" />
        <polygon points="1255,63 1410,1062 1152,1498 1068,675" fill="#000" />
        <polygon points="22,33 1291,38 1291,63 22,58" fill="#00dfd0" />
        <polygon points="1255,50 1291,38 1455,1062 1410,1062" fill="#00dfd0" />
        <polygon points="1410,1062 1455,1062 1183,1508 1154,1498" fill="#00877a" />
        <polygon points="63,1496 1154,1498 1183,1508 63,1505" fill="#00877a" />
      </g>
      <path d="M845 909c8-3 22-3 30 0z" fill="#bdbdbd" />
      <g transform="translate(342 884)">
        <path d="M0 0v-14" stroke="#3bc43b" strokeWidth="1.5" /><path d="M0 0h11" stroke="#e03434" strokeWidth="1.5" /><path d="M0 0v10" stroke="#3a5be0" strokeWidth="1.5" />
        <text x="-3" y="-15" fontSize="9" fontWeight="600" fill="#3bc43b">y</text>
        <text x="12" y="3" fontSize="9" fontWeight="600" fill="#e03434">x</text>
        <text x="-3" y="19" fontSize="9" fontWeight="600" fill="#3a5be0">z</text>
      </g>
      <path d="M1552 218h49l2 39h-52z" fill="#a8a8a8" />
      <path d="M1551 261h52l-3 18h-47z" fill="#9a9a9a" />
      <text x="1576" y="241" textAnchor="middle" fontSize="9" fill="#555">TOP</text>
      <path d="M1560 269h32" stroke="#6d6d6d" strokeWidth="3" strokeDasharray="2 1" />
      <text x="968" y="901" textAnchor="middle" fontSize="11" fill="#f0f0f0">persp</text>
    </svg>
  )
}

function Viewport() {
  return (
    <div className="ml-[4px] mt-[3px] mb-[2px] flex w-[1322px] shrink-0 flex-col border border-[#7b7b7b] bg-[#444]">
      <div className="flex h-[18px] shrink-0 items-center gap-[16px] pl-[9px] text-[11px] text-[#bbbbbb]">
        {['View', 'Shading', 'Lighting', 'Show', 'Renderer', 'Panels'].map(m => <span key={m}>{m}</span>)}
      </div>
      <ViewToolbar />
      <Scene />
    </div>
  )
}

function ChannelBox() {
  return (
    <div className="ml-[4px] flex w-[260px] shrink-0 flex-col bg-[#444] text-[11px] text-[#bbbbbb]">
      <div className="flex h-[23px] shrink-0 items-start justify-end gap-[5px] pr-[2px] pt-[3px]">
        <Ic s={15}><path d="M7.5 1l2 4h-4z" fill="#6fb04c" /><path d="M7.5 5v4" stroke={G} /><path d="M1 14l3-4 2 4z" fill="#3f6fd0" /><path d="M14 14l-3-4-2 4z" fill="#d64a3d" /></Ic>
        <Ic s={16}><path d="M2 14a6 6 0 1 1 12 0" stroke={T} strokeWidth="3.5" /><circle cx="8" cy="9" r="2" fill="#777" /></Ic>
        <Ic s={15}><path d="M1 1v13h13" stroke="#777" /><path d="M3 12L13 2M8 2h5v5" stroke={T} strokeWidth="1.5" /></Ic>
      </div>
      <div className="flex h-[19px] shrink-0 items-center gap-[15.5px] pl-[13px]">
        <span>Channels</span><span>Edit</span><span>Object</span><span>Show</span>
      </div>
      <div className="flex h-[333px] shrink-0 items-center justify-center pb-[2px] pl-[4px] text-center text-[11px] font-semibold leading-[13px] text-[#d0d0d0]">
        <div>Select objects in the scene to view,<br />edit and set keyframes on channels<br />(attributes)</div>
      </div>
      <div className="ml-[90px] h-0 w-[85px] shrink-0 border-t border-dotted border-[#777]" />
      <div className="mx-[5px] mt-[10px] mb-[6px] flex min-h-0 flex-1 flex-col bg-[#3a3a3a]">
        <div className="flex h-[18px] shrink-0 gap-[2px] pl-[1px]">
          <div className="flex w-[60px] items-center justify-center rounded-t-[3px] bg-[#444] text-[#e6e6e6]">Display</div>
          <div className="flex w-[47px] items-center justify-center rounded-t-[3px] bg-[#3f3f3f] text-[#7d7d7d]">Anim</div>
        </div>
        <div className="flex min-h-0 flex-1 flex-col bg-[#444]">
          <div className="flex h-[20px] shrink-0 items-center gap-[15px] pl-[11px]">
            <span>Layers</span><span>Options</span><span>Help</span>
          </div>
          <div className="flex h-[19px] shrink-0 items-center justify-end gap-[11px] pr-[4px]">
            <Layer><path d="M10 8V3M7 5l3-3 3 3" stroke={T} strokeWidth="2" /></Layer>
            <Layer><path d="M10 1v6M7 5l3 3 3-3" stroke={T} strokeWidth="2" /></Layer>
            <Layer><path d="M11 0v6M8 3h6" stroke={T} strokeWidth="2" /></Layer>
            <Layer><circle cx="11" cy="3" r="3" fill={T} /></Layer>
          </div>
          <div className="mx-[3px] mt-[6px] min-h-0 flex-1 bg-[#2b2b2b]" />
          <div className="flex h-[14px] shrink-0 items-center px-[2px]">
            <svg width="6" height="8" viewBox="0 0 6 8"><path d="M0 4l6-4v8z" fill="#bdbdbd" /></svg>
            <div className="ml-[4px] mr-[70px] h-[10px] flex-1 rounded-full bg-[#5f5f5f]" />
            <svg width="6" height="8" viewBox="0 0 6 8"><path d="M6 4L0 0v8z" fill="#bdbdbd" /></svg>
          </div>
        </div>
      </div>
    </div>
  )
}

const Layer = ({ children }: { children: ReactNode }) => (
  <Ic s={15} h={10}><path d="M0 6l7-4 7 4-7 4z" fill="#cfcfcf" />{children}</Ic>
)

const VTab = ({ active, h: height, children }: { active?: boolean; h: number; children: ReactNode }) => (
  <div
    className={`flex items-center justify-center rounded-r-[3px] whitespace-nowrap text-[11px] [writing-mode:vertical-rl] ${active ? 'bg-[#444] text-[#d8d8d8]' : 'border-b border-[#333] bg-[#3d3d3d] text-[#7b7b7b]'}`}
    style={{ height }}
  >
    {children}
  </div>
)

function SideTabs() {
  return (
    <div className="flex w-[20px] shrink-0 flex-col pt-[1px] pr-[2px]">
      <VTab active h={157}>Channel Box / Layer Editor</VTab>
      <VTab h={103}>Attribute Editor</VTab>
      <VTab h={113}>Modeling Toolkit</VTab>
      <VTab h={70}>Human IK</VTab>
    </div>
  )
}

const ticks = Array.from({ length: 25 }, (_, i) => i * 5)

const Play = ({ children }: { children: ReactNode }) => (
  <div className="flex h-[20px] w-[28px] shrink-0 items-center justify-center">{children}</div>
)

function TimeSlider() {
  return (
    <div className="relative mt-[3px] flex h-[49px] shrink-0 items-start border-b-2 border-[#333] bg-[#444] pl-[4px] text-[11px]">
      <Grip className="h-[46px]" />
      <div className="ml-[7px] flex w-[1613px] shrink-0 flex-col overflow-hidden">
        <div className="flex h-[8px] pl-[8px]">
          {ticks.map(t => <div key={t} className="w-[66px] shrink-0 border-l border-[#222]" />)}
        </div>
        <div className="flex h-[32px] bg-[#2b2b2b] pl-[8px]">
          {ticks.map(t => (
            <div key={t} className="relative w-[66px] shrink-0">
              <span className="absolute top-0 left-[6px] leading-[15px] text-[#8f8f8f]">{t}</span>
              <div className="absolute bottom-0 left-0 h-[16px] w-px bg-[#a5a5a5]" />
            </div>
          ))}
        </div>
        <div className="flex h-[8px] border-t-2 border-[#666] pl-[8px]">
          {ticks.map(t => <div key={t} className="w-[66px] shrink-0 border-l border-[#222]" />)}
        </div>
      </div>
      <div className="absolute top-0 left-[842px] flex h-[47px] w-[13px] items-end justify-center bg-[#5d5d5d]/70 pb-[9px] text-[11px] text-white">62</div>
      <div className="ml-[9px] mt-[13px] flex h-[20px] w-[50px] shrink-0 items-center rounded-[3px] bg-[#2b2b2b] pl-[6px] text-[#bbbbbb]">62</div>
      <div className="ml-[5px] mt-[13px] flex">
        <Play><Ic s={14}><path d="M1 1h2v12H1zM8 1L4 7l4 6zM13 1L9 7l4 6z" fill={G} /></Ic></Play>
        <Play><Ic s={14}><path d="M2 1h2v12H2zM12 1L5 7l7 6z" fill={G} /></Ic></Play>
        <Play><Ic s={14} h={18}><path d="M2 0h2v18H2z" fill="#e07a2f" /><path d="M13 3L6 9l7 6z" fill={G} /></Ic></Play>
        <Play><Ic s={14} h={18}><path d="M13 1L2 9l11 8z" fill={G} /></Ic></Play>
        <Play><Ic s={14} h={18}><path d="M1 1l12 8-12 8z" fill={G} /></Ic></Play>
        <Play><Ic s={14} h={18}><path d="M10 0h2v18h-2z" fill="#e07a2f" /><path d="M1 3l7 6-7 6z" fill={G} /></Ic></Play>
        <Play><Ic s={14}><path d="M10 1h2v12h-2zM2 1l7 6-7 6z" fill={G} /></Ic></Play>
        <Play><Ic s={14}><path d="M11 1h2v12h-2zM1 1l4 6-4 6zM6 1l4 6-4 6z" fill={G} /></Ic></Play>
      </div>
    </div>
  )
}

function RangeSlider() {
  return (
    <div className="mt-[2px] flex h-[36px] shrink-0 items-center bg-[#444] pb-[2px] pl-[4px] text-[11px] text-[#bbbbbb]">
      <Grip className="h-[30px]" />
      <div className="ml-[8px] flex h-[20px] w-[49px] shrink-0 items-center rounded-[2px] bg-[#2b2b2b] pl-[5px]">0</div>
      <div className="ml-[10px] flex h-[20px] w-[1089px] shrink-0 items-center rounded-[2px] bg-[#2b2b2b] pl-[2px]">
        <div className="relative flex h-[18px] w-[652px] items-center bg-[#444] px-[7px]">
          <div className="absolute inset-y-0 left-0 w-[7px] bg-[#8a8a8a]" />
          <div className="absolute inset-y-0 right-0 w-[8px] bg-[#8a8a8a]" />
          <span className="ml-[6px]">0</span>
          <div className="ml-[307px] h-[16px] border-l border-dotted border-[#8a8a8a]" />
          <span className="ml-auto mr-[9px]">120</span>
        </div>
      </div>
      <div className="ml-[10px] flex h-[20px] w-[50px] shrink-0 items-center rounded-[2px] bg-[#2b2b2b] pl-[2px]">204</div>
      <Sep className="ml-[20px]" />
      <div className="ml-[25px]"><Ic s={16} h={24}><path d="M1 4h9v20l-4.5-5L1 24z" fill="#e07a2f" /><path d="M11 0v9M7 4.5h8" stroke="#ddd" strokeWidth="2" /></Ic></div>
      <Sep className="ml-[15px]" />
      <div className="ml-[29px]"><Tri c="#8c8c8c" w={9} /></div>
      <div className="ml-[5px] flex h-[21px] w-[102px] shrink-0 items-center rounded-[3px] border border-[#555] pl-[5px] whitespace-nowrap">No Character Set</div>
      <div className="ml-[14px]"><Tri c="#8c8c8c" w={9} /></div>
      <div className="ml-[7px] flex h-[21px] w-[102px] shrink-0 items-center rounded-[3px] border border-[#555] pl-[5px] whitespace-nowrap">No Anim Layer</div>
      <Sep className="ml-[21px]" />
      <div className="ml-[22px] flex h-[20px] w-[95px] shrink-0 items-center rounded-[2px] bg-[#5a5a5a] pl-[2px]">
        <span>24 fps</span>
        <div className="ml-auto flex h-full w-[19px] items-center justify-center border-l border-[#444]"><Tri c="#bdbdbd" /></div>
      </div>
      <div className="ml-[15px]"><Ic s={18}><path d="M2 9a6 6 0 016-6h8M16 9a6 6 0 01-6 6H2" stroke={G} strokeWidth="2" /><path d="M12 0l4 3-4 3zM6 12l-4 3 4 3z" fill={G} /></Ic></div>
      <div className="ml-[11px] flex h-[24px] w-[23px] shrink-0 items-center justify-center bg-[#4f86ad]">
        <Ic s={18}><path d="M1 3h16v12H1z" fill="#e08a3c" stroke="#333" /><path d="M4 7h3v6H4zM8 6h3v7H8zM12 8h3v5h-3z" fill="#333" /></Ic>
      </div>
      <Sep className="ml-[18px]" />
      <div className="ml-[21px]"><Ic s={18}><path d="M1 6h4l5-5v16l-5-5H1z" fill={G} /><path d="M12 5c2 2 2 6 0 8M14 3c3 3 3 9 0 12" stroke={G} /></Ic></div>
      <div className="ml-[12px]"><Ic s={20}><circle cx="10" cy="10" r="8" stroke={G} strokeDasharray="5 2" /><path d="M10 3v14M6 10h8" stroke="#e07a2f" strokeWidth="1.4" /></Ic></div>
      <div className="ml-[9px]"><Ic s={20}><circle cx="4" cy="4" r="3" stroke={G} /><circle cx="13" cy="4" r="2" fill="#e07a2f" /><path d="M12 7l-3 6-3 5M12 7l4 5M10 13l5 5" stroke="#e07a2f" strokeWidth="2" /></Ic></div>
    </div>
  )
}

function CommandLine() {
  return (
    <div className="relative flex h-[36px] shrink-0 items-center border-t-2 border-[#333] bg-[#444] pl-[4px] text-[11px] text-[#bbbbbb]">
      <Grip className="h-[28px]" />
      <span className="ml-[144px] w-[671px] pt-[4px] text-[#d0d0d0]">ct to move.</span>
      <Grip className="h-[28px] !w-[3px]" />
      <span className="ml-[6px] w-[24px]">MEL</span>
      <div className="ml-[5px] flex h-[20px] w-[398px] shrink-0 rounded-[2px] bg-[#2b2b2b]" />
      <div className="ml-[5px] h-[20px] w-[618px] shrink-0 rounded-[2px] bg-[#2b2b2b]" />
      <div className="ml-[10px] flex h-[24px] w-[18px] shrink-0 flex-col bg-[#bbb] text-center text-[9px] font-bold leading-[20px] text-[#444]">
        <div className="h-[4px] bg-[#888]" />{'{;}'}
      </div>
      <div className="absolute bottom-0 left-[8px] flex h-[27px] w-[144px] items-center bg-white pl-[7px]">
        <MayaLogo size={17} />
        <svg width="10" height="11" viewBox="0 0 10 11" className="ml-[1px]"><path d="M.5 3h7v7.5h-7zM2.5 3V.5h7v7.5H7.5" stroke="#888" fill="none" /></svg>
        <div className="ml-[35px] h-[11px] w-[11px] border border-[#666]" />
        <svg width="11" height="11" viewBox="0 0 11 11" className="ml-[35px]"><path d="M.5.5l10 10M10.5.5l-10 10" stroke="#666" /></svg>
      </div>
    </div>
  )
}

const under = 'h-[2px] w-[40px] shrink-0'

const Task = ({ on, active, hot, children }: { on?: boolean; active?: boolean; hot?: boolean; children: ReactNode }) => (
  <div className={`flex h-full w-[49px] shrink-0 flex-col items-center ${active ? 'bg-white/20' : ''} ${hot ? 'bg-[#b0612a]' : ''}`}>
    <div className="flex min-h-0 flex-1 items-center justify-center pt-[2px]">{children}</div>
    <div className={`${under} ${on ? 'bg-[#7fe8d8]' : ''} ${hot ? '!w-[49px] !bg-[#e67e22]' : ''}`} />
  </div>
)

function Taskbar() {
  return (
    <div className="relative flex h-[40px] shrink-0 items-stretch bg-[#14233f] text-white">
      <svg className="absolute inset-0" width="1920" height="40" viewBox="0 0 1920 40">
        <path d="M0 0h48v40H0zM335 0h60l4 40h-64zM1514 0h406v40h-406z" fill="#22355c" />
        <path d="M1540 0l45 40M1640 0l45 40M1770 0l45 40M1870 0l45 40M375 0l20 40" stroke="#14233f" strokeWidth="2" />
      </svg>
      <div className="absolute top-0 left-[702px] h-[7px] w-[503px] rounded-[2px] bg-white/10" />
      <div className="relative flex w-[48px] items-center justify-center">
        <svg width="17" height="17" viewBox="0 0 17 17"><path d="M0 2.4l7-1v6.8H0zM8 1.2L17 0v8.2H8zM0 9h7v6.8l-7-1zM8 9h9v8l-9-1.2z" fill="#fff" /></svg>
      </div>
      <div className="relative flex w-[287px] items-center overflow-hidden border border-[#5a5a5a] bg-[#333] pl-[11px] text-[14px]">
        <svg width="16" height="18" viewBox="0 0 16 18" fill="none"><circle cx="10" cy="6" r="5" stroke="#ddd" /><path d="M7 10L1 17" stroke="#ddd" /></svg>
        <span className="ml-[12px] whitespace-nowrap text-[#d8d8d8]">Type here to search</span>
        <svg className="absolute right-0 bottom-0" width="78" height="40" viewBox="0 0 78 40">
          <path d="M2 40l10-10h66v10z" fill="#e3bc8a" />
          <path d="M12 12l24-4 4 22-24 4z" fill="#6fb04c" />
          <path d="M14 11l22-3 3 20-22 3z" fill="#f1f1e6" />
          <path d="M18 16l14-2M19 21l14-2M20 26l14-2" stroke="#999" />
          <path d="M38 4l-6 14" stroke="#e89b2f" strokeWidth="3" />
          <path d="M50 14c0-6 5-7 5-11h4c0 4 5 5 5 11v18H50z" fill="#2a78e4" />
          <path d="M53 22h8v8h-8z" fill="#7fc4f4" />
          <path d="M50 30h14v3H50z" fill="#c08ae8" />
        </svg>
      </div>
      <div className="relative flex w-[50px] items-center justify-center">
        <svg width="16" height="20" viewBox="0 0 16 20" fill="none"><path d="M0 1h10M0 19h10M0 6h9v8H0M13 1h3M13 6h3M13 10h3M13 14h3M13 19h3" stroke="#eee" strokeWidth="1.4" /></svg>
      </div>
      <div className="relative ml-[331px] flex h-full">
        <Task on><svg width="26" height="30" viewBox="0 0 26 30" fill="none"><ellipse cx="13" cy="15" rx="11" ry="13.5" stroke="#d4173f" strokeWidth="2" /><ellipse cx="13" cy="15" rx="6" ry="12" stroke="#d4173f" strokeWidth="1.5" /></svg></Task>
        <Task><svg width="24" height="28" viewBox="0 0 24 28"><path d="M1 2h14l8 6v18H1z" fill="#f2c43e" /><path d="M1 2h14v6H1z" fill="#e0a82e" /><path d="M8 18h8v8H8z" fill="#3f8fd6" /></svg></Task>
        <Task><FaSteam size={26} className="rounded-full bg-white text-[#16456f]" /></Task>
        <Task on><FaSpotify size={27} className="rounded-full bg-black text-[#1ed760]" /></Task>
        <Task hot>
          <div className="relative flex h-[26px] w-[26px] items-center justify-center rounded-full bg-[#5865f2]">
            <FaDiscord size={18} className="text-white" />
            <div className="absolute -right-[5px] -bottom-[4px] flex h-[15px] w-[15px] items-center justify-center rounded-full bg-[#e23b3b] text-[9px] font-bold">9+</div>
          </div>
        </Task>
        <Task on>
          <div className="relative flex h-[26px] w-[26px] items-center justify-center rounded-[4px] bg-[#5059c9] text-[13px] font-bold">
            T
            <div className="absolute -right-[4px] -bottom-[4px] flex h-[15px] w-[15px] items-center justify-center rounded-full bg-[#13a10e] text-[10px]">✓</div>
          </div>
        </Task>
        <Task on><svg width="26" height="26" viewBox="0 0 26 26"><circle cx="13" cy="13" r="13" fill="#34a853" /><path d="M13 0a13 13 0 0111.3 6.5H13L6 11 2 5A13 13 0 0113 0z" fill="#ea4335" /><path d="M24.3 6.5A13 13 0 0113 26l6-11-3-8.5z" fill="#fbbc05" /><circle cx="13" cy="13" r="6" fill="#fff" /><circle cx="13" cy="13" r="4.5" fill="#4285f4" /></svg></Task>
        <Task on><svg width="26" height="28" viewBox="0 0 26 28"><circle cx="13" cy="14" r="13" fill="#1b2630" /><path d="M13 4c5 2 6 7 4 11l-2 7h-4l-2-7C7 11 8 6 13 4z" fill="#54c6b4" /></svg></Task>
        <Task on active><MayaLogo size={28} /></Task>
        <Task on><svg width="24" height="28" viewBox="0 0 24 28"><path d="M0 3h24v25H0z" fill="#2a8fe8" /><path d="M0 28l9-15 6 8 3-4 6 11z" fill="#bfe6ff" /><circle cx="17" cy="8" r="3" fill="#fff" /></svg></Task>
      </div>
      <div className="relative ml-auto flex items-center pr-[14px] text-[13.5px]">
        <svg width="24" height="32" viewBox="0 0 24 32"><path d="M14 1C20 12 12 26 1 24c4 6 17 8 21-3 3-8-2-17-8-20z" fill="#f0a030" /></svg>
        <span className="ml-[5px] mr-[26px] whitespace-pre text-[#f0f0f0]">27°F  Clear</span>
        <svg width="12" height="8" viewBox="0 0 12 8" fill="none"><path d="M1 7l5-6 5 6" stroke="#eee" /></svg>
        <svg width="12" height="20" viewBox="0 0 12 20" fill="none" className="ml-[11px]"><path d="M2 3h7v14H2zM4 1h3M4 19h3M9 9l2-1v4l-2-1" stroke="#eee" /></svg>
        <svg width="16" height="18" viewBox="0 0 16 18" fill="none" className="ml-[11px]"><path d="M1 3h13v9H1zM8 12v4M4 16h8M4 1h7" stroke="#eee" /></svg>
        <svg width="18" height="18" viewBox="0 0 18 18" fill="none" className="ml-[9px]"><path d="M1 7h3l5-5v14l-5-5H1zM11 6c1.5 2 1.5 4 0 6M13 4c3 3 3 7 0 10" stroke="#eee" /></svg>
        <div className="ml-[6px] w-[60px] text-center text-[12px] leading-[17px] text-[#f0f0f0]">
          <div>4:33 AM</div>
          <div>1/17/2025</div>
        </div>
        <div className="relative ml-[21px] h-[24px] w-[18px]">
          <svg width="18" height="20" viewBox="0 0 18 20"><path d="M0 0h16v13H5l-3 4v-4H0z" fill="#eee" /></svg>
          <div className="absolute -right-[4px] -bottom-[3px] flex h-[15px] w-[15px] items-center justify-center rounded-full border border-[#ddd] bg-[#22355c] text-[10px]">1</div>
        </div>
      </div>
    </div>
  )
}

export default function App() {
  return (
    <div className="flex h-[1080px] w-[1920px] flex-col overflow-hidden bg-[#444] [font-family:'Open_Sans','Liberation_Sans',sans-serif]">
      <TitleBar />
      <MenuBar />
      <StatusLine />
      <Shelf />
      <div className="flex min-h-0 flex-1 bg-[#333]">
        <Toolbox />
        <Outliner />
        <Viewport />
        <ChannelBox />
        <SideTabs />
      </div>
      <TimeSlider />
      <RangeSlider />
      <CommandLine />
      <Taskbar />
    </div>
  )
}
